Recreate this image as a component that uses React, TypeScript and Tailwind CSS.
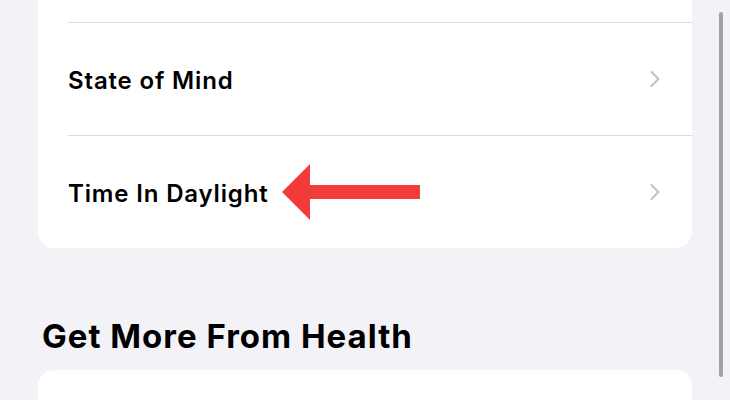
import React from "react";

function Chevron() {
  return (
    <svg width="12" height="18" viewBox="0 0 12 18" className="shrink-0">
      <path d="M2.5 2 L9.5 9 L2.5 16" fill="none" stroke="#c4c4c7" strokeWidth="2.2" strokeLinecap="round" strokeLinejoin="round" />
    </svg>
  );
}

function Row({ label, children }: { label: string; children?: React.ReactNode }) {
  return (
    <div className="relative flex h-[112px] items-center justify-between pl-[30px] pr-[31px]">
      <span className="pt-[3px] text-[24px] font-semibold tracking-[0.85px] text-black">{label}</span>
      <Chevron />
      {children}
    </div>
  );
}

export default function App() {
  return (
    <div
      className="relative h-[400px] w-[730px] overflow-hidden bg-[#f2f2f7]"
      style={{ fontFamily: 'Inter, "Noto Sans", sans-serif' }}
    >
      <div className="px-[38px]">
        <div className="rounded-b-[16px] bg-white">
          <div className="h-[22px]" />
          <div className="ml-[30px] h-px bg-[#dcdcdf]" />
          <Row label="State of Mind" />
          <div className="ml-[30px] h-px bg-[#dcdcdf]" />
          <Row label="Time In Daylight">
            <svg
              className="absolute left-[244px] top-[28px]"
              width="140"
              height="58"
              viewBox="0 0 140 58"
            >
              <polygon points="0,28 28,0 28,21 138,21 138,35 28,35 28,56" fill="#f23b3b" />
            </svg>
          </Row>
        </div>
        <h2 className="mt-[69px] pl-[4px] text-[33px] font-bold leading-[38px] tracking-[1px] text-black">
          Get More From Health
        </h2>
        <div className="mt-[15px] h-[60px] rounded-t-[16px] bg-white" />
      </div>
      <div className="absolute right-[7px] top-[12px] h-[365px] w-[4px] rounded-full bg-[#a1a1a6]" />
    </div>
  );
}
